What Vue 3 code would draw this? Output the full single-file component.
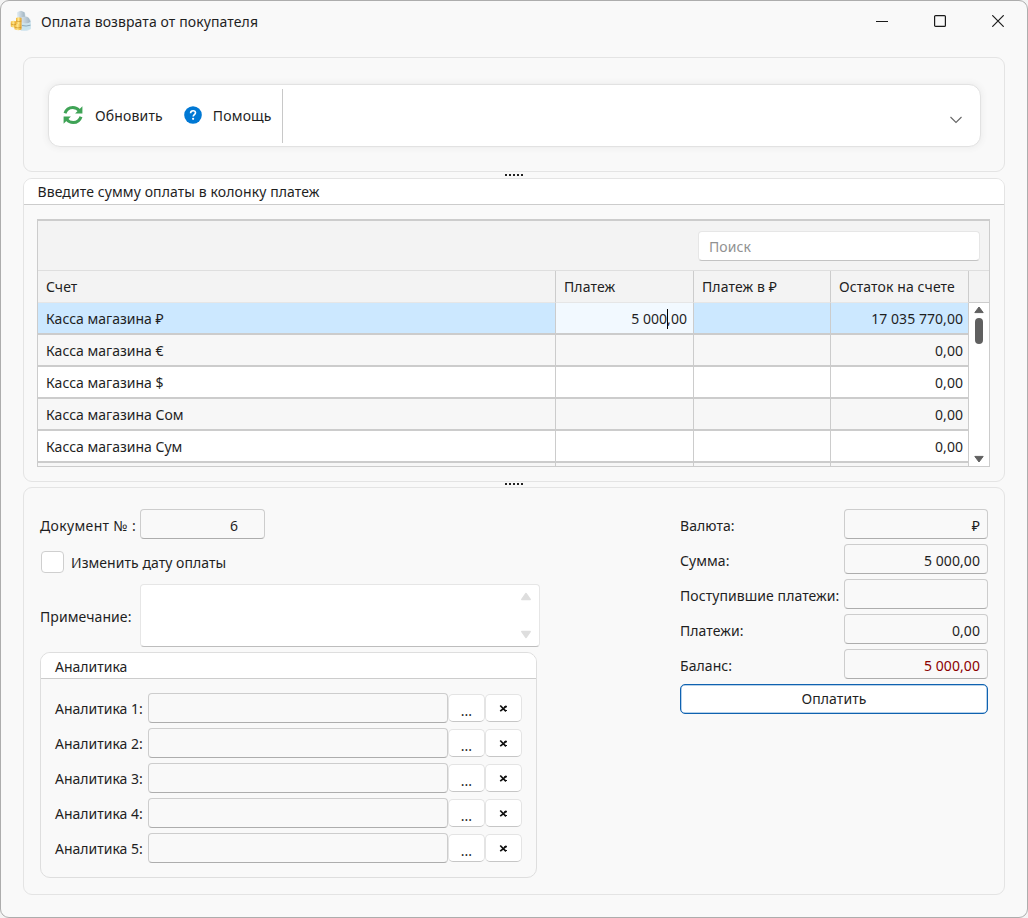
<script setup>
import { ref } from 'vue'

const rows = ref([
  { name: 'Касса магазина ₽', pay: '5 000,00', rest: '17 035 770,00', selected: true },
  { name: 'Касса магазина €', pay: '', rest: '0,00' },
  { name: 'Касса магазина $', pay: '', rest: '0,00' },
  { name: 'Касса магазина Сом', pay: '', rest: '0,00' },
  { name: 'Касса магазина Сум', pay: '', rest: '0,00' },
  { name: '', pay: '', rest: '' },
])

const totals = [
  { label: 'Валюта:', value: '₽' },
  { label: 'Сумма:', value: '5 000,00' },
  { label: 'Поступившие платежи:', value: '' },
  { label: 'Платежи:', value: '0,00' },
  { label: 'Баланс:', value: '5 000,00', due: true },
]
</script>

<template>
  <div class="desktop">
    <div class="window">
      <header class="titlebar">
        <svg class="app-icon" width="22" height="22" viewBox="0 0 22 22">
          <defs>
            <linearGradient id="gold" x1="0" x2="1"><stop offset="0" stop-color="#f0b53a" /><stop offset=".45" stop-color="#ffe68c" /><stop offset="1" stop-color="#e29d1e" /></linearGradient>
            <linearGradient id="steel" x1="0" x2="1"><stop offset="0" stop-color="#dfe8ee" /><stop offset="1" stop-color="#9fb3c0" /></linearGradient>
          </defs>
          <path d="M7 2.500 11 1l4 2 1 4 5 3v9l-4 2h-6l-3-6z" fill="#d9e8f0" />
          <path d="M7.500 2 11 .8l3.500 1.500.5 5-6 1z" fill="url(#steel)" />
          <path d="M10 8.500q5-3.500 9-.5l1.500 4q-5 3-10 0z" fill="url(#steel)" />
          <path d="M12 13q5 2 8.500-.5v6.500q-4 1.500-8.500 1z" fill="#c9e4ee" />
          <path d="M12 15.500q4 1.200 8.500-.3" fill="none" stroke="#8fa9b8" />
          <path d="M.8 11.500q3-1.500 5.500 0v5.500q-3 1-5.500-.5z" fill="url(#gold)" />
          <path d="M6 8q2.800-1.500 5.500 0v7q-2.500 1.500-5.500 0z" fill="url(#gold)" />
          <path d="M4.500 15q3.500-1.800 7 0v4.500q-3.500 1.500-7-.2z" fill="url(#gold)" />
          <path d="M6 11q3 1.300 5.500 0M.8 14q2.500 1.300 5.200.5M4.500 17.200q3.500 1.500 7 0" fill="none" stroke="#c48a1c" stroke-width=".6" />
        </svg>
        <span class="title">Оплата возврата от покупателя</span>
        <div class="controls">
          <svg width="12" height="12" viewBox="0 0 12 12"><path d="M0 6.500h12" stroke="#1b1b1b" /></svg>
          <svg width="12" height="12" viewBox="0 0 12 12"><rect x=".6" y=".6" width="10.800" height="10.800" rx="1" fill="none" stroke="#1b1b1b" stroke-width="1.200" /></svg>
          <svg width="12" height="12" viewBox="0 0 12 12"><path d="M.3.3l11.400 11.400M11.700.3.3 11.700" stroke="#1b1b1b" stroke-width="1.200" /></svg>
        </div>
      </header>

      <section class="panel tools">
        <div class="toolbar">
          <button class="tool refresh">
            <svg width="20" height="20" viewBox="0 0 20 20">
              <g fill="none" stroke="#3fa356" stroke-width="3">
                <path d="M2 8.200C3.200 4.500 6.300 2.400 9.800 2.400c2.900 0 4.900 1.200 6.500 3.200" />
                <path d="M18 11.800c-1.200 3.700-4.300 5.800-7.800 5.800-2.900 0-4.900-1.200-6.500-3.200" />
              </g>
              <path d="M19.400 1.200v7.300h-7.300zM.6 18.800v-7.300h7.300z" fill="#3fa356" />
            </svg>
            <span>Обновить</span>
          </button>
          <button class="tool help">
            <svg width="18" height="18" viewBox="0 0 18 18">
              <circle cx="9" cy="9" r="8.800" fill="#0078d4" />
              <path d="M6.600 7.200c0-1.500 1-2.500 2.500-2.500s2.400.9 2.400 2.100c0 1.700-2.300 1.900-2.300 3.700" fill="none" stroke="#fff" stroke-width="1.600" />
              <circle cx="9.100" cy="12.800" r="1.100" fill="#fff" />
            </svg>
            <span>Помощь</span>
          </button>
          <i class="divider"></i>
          <svg class="chevron" width="12" height="8" viewBox="0 0 12 8"><path d="M.5 1 6 6.400 11.500 1" fill="none" stroke="#666" stroke-width="1.100" /></svg>
        </div>
      </section>

      <div class="grip upper"><i v-for="n in 5" :key="n"></i></div>

      <section class="panel accounts">
        <h2 class="caption">Введите сумму оплаты в колонку платеж</h2>
        <div class="grid">
          <div class="searchbar"><div class="search">Поиск</div></div>
          <div class="head">
            <span class="c1">Счет</span><span class="c2">Платеж</span><span class="c3">Платеж в ₽</span><span class="c4">Остаток на счете</span><span class="c5"></span>
          </div>
          <div class="body">
            <div class="rows">
              <div v-for="(r, i) in rows" :key="i" class="row" :class="{ selected: r.selected, odd: i % 2 }">
                <span class="c1">{{ r.name }}</span>
                <span class="c2 num"><template v-if="r.selected">5 000<i class="caret"></i>,00</template></span>
                <span class="c3"></span>
                <span class="c4 num">{{ r.rest }}</span>
              </div>
            </div>
            <div class="scroll">
              <svg width="10" height="8" viewBox="0 0 10 8"><path d="M5 1 9.200 6.600H.8z" fill="#606060" stroke="#606060" stroke-linejoin="round" /></svg>
              <i class="thumb"></i>
              <svg class="down" width="10" height="8" viewBox="0 0 10 8"><path d="M5 7 9.200 1.400H.8z" fill="#606060" stroke="#606060" stroke-linejoin="round" /></svg>
            </div>
          </div>
        </div>
      </section>

      <div class="grip"><i v-for="n in 5" :key="n"></i></div>

      <section class="panel details">
        <div class="left">
          <div class="doc"><label>Документ № :</label><div class="field docno">6</div></div>
          <div class="check"><i class="box"></i><span>Изменить дату оплаты</span></div>
          <div class="note">
            <label>Примечание:</label>
            <div class="memo">
              <svg width="12" height="9" viewBox="0 0 12 9"><path d="M6 1.500 10.200 7.500H1.800z" fill="#dedede" stroke="#dedede" stroke-width="1.500" stroke-linejoin="round" /></svg>
              <svg width="12" height="9" viewBox="0 0 12 9"><path d="M6 7.500 10.200 1.500H1.800z" fill="#dedede" stroke="#dedede" stroke-width="1.500" stroke-linejoin="round" /></svg>
            </div>
          </div>
          <div class="group">
            <h3>Аналитика</h3>
            <div class="lines">
              <div v-for="n in 5" :key="n" class="line">
                <label>Аналитика {{ n }}:</label>
                <div class="field"></div>
                <button class="mini dots">...</button>
                <button class="mini">
                  <svg width="9" height="9" viewBox="0 0 9 9"><path d="M1.200 1.500 7 7.300M7.500 1.800 4.500 4.600 1.200 7.200" fill="none" stroke="#111" stroke-width="1.700" /><path d="M5 2.800h3M5.500 6.500H8" stroke="#111" stroke-width="1" /></svg>
                </button>
              </div>
            </div>
          </div>
        </div>
        <div class="right">
          <div v-for="t in totals" :key="t.label" class="total">
            <label>{{ t.label }}</label>
            <div class="field" :class="{ due: t.due }">{{ t.value }}</div>
          </div>
          <button class="pay">Оплатить</button>
        </div>
      </section>
    </div>
  </div>
</template>

<style>
html, body { background: #f3f3f3; }
</style>

<style scoped>
* { box-sizing: border-box; }
.desktop { width: 1028px; height: 918px; overflow: hidden; font: 14px/20px "Noto Sans", "Open Sans", sans-serif; color: #1f1f1f; }
button { font: inherit; color: inherit; letter-spacing: inherit; margin: 0; padding: 0; border: 0; background: none; }
span, label, .field, button { white-space: nowrap; }
.window { height: 918px; border: 1px solid #adadad; border-radius: 9px; background: #f9f9f9; padding: 0 22px; }
.titlebar { height: 56px; margin: 0 -22px; padding: 9px 23px 0 9px; display: flex; align-items: flex-start; }
.title { margin: 2px 0 0 9px; letter-spacing: .1px; }
.controls { margin: 5px 0 0 auto; display: flex; gap: 46px; }
.controls svg { display: block; }
.panel { border: 1px solid #e4e4e4; border-radius: 9px; }
.tools { height: 115px; padding: 26px 24px; }
.toolbar { height: 63px; margin-right: -1px; background: #fff; border: 1px solid #e2e2e2; border-radius: 12px; box-shadow: 0 0 6px 1px #ececec; display: flex; align-items: center; padding: 0 18px 0 14px; letter-spacing: .15px; }
.tool { display: flex; align-items: center; }
.tool svg { margin-top: -1px; }
.refresh span { margin-left: 12px; }
.help { margin-left: 21px; }
.help span { margin-left: 11px; }
.divider { width: 1px; height: 54px; background: #c8c8c8; margin-left: 10px; }
.chevron { margin: 9px 0 0 auto; }
.grip { height: 5px; padding-top: 1px; display: flex; justify-content: center; gap: 2px; }
.grip.upper { height: 6px; padding-top: 2px; }
.grip i { width: 2px; height: 2px; background: #222; }
.accounts { height: 304px; overflow: hidden; }
h2, h3 { margin: 0; font: inherit; background: #fff; border-bottom: 1px solid #ccc; }
.caption { height: 26px; padding: 3px 13px 0 13.500px; letter-spacing: .1px; }
.grid { margin: 14px 14px 0 13px; height: 248px; border: 1px solid #ccc; border-top-width: 2px; display: flex; flex-direction: column; background: #f3f3f3; }
.searchbar { height: 50px; border-bottom: 1px solid #dedede; display: flex; justify-content: flex-end; padding: 10px 9px 0 0; flex: none; }
.search { width: 282px; height: 30px; border: 1px solid #e6e6e6; border-bottom-color: #c3c3c3; border-radius: 4px; background: #fff; color: #919191; padding: 5px 10px; letter-spacing: .1px; }
.head { height: 32px; display: flex; flex: none; letter-spacing: .1px; }
.head span { padding: 6px 8px; border-right: 1px solid #ccc; border-bottom: 1px solid #e6e6e6; }
.head .c5 { flex: 1; border-right: 0; border-bottom-color: #ccc; }
.c1 { width: 518px; }
.c2, .c3, .c4 { width: 138px; }
.c3 { width: 137px; }
.body { flex: 1; min-height: 0; display: flex; overflow: hidden; }
.rows { width: 931px; flex: none; overflow: hidden; }
.row { height: 32px; display: flex; background: #fff; }
.row span { border-right: 1px solid #ccc; border-bottom: 2px solid #ccc; padding: 6px 8px 4px; height: 32px; }
.row.odd { background: #f7f7f7; }
.row.selected { background: #cce8ff; }
.row.selected .c2 { background: #f2f9ff; }
.row .num { text-align: right; padding: 6px 5px 4px 0; letter-spacing: .05px; }
.row .c2.num { padding-right: 6px; }
.caret { display: inline-block; width: 1px; height: 20px; background: #000; vertical-align: -5px; margin: 0 -1px 0 0; }
.scroll { flex: 1; background: #fff; display: flex; flex-direction: column; align-items: center; padding: 3px 0; }
.scroll svg { display: block; flex: none; }
.thumb { width: 8px; height: 26px; border-radius: 4px; background: #606060; margin-top: 4px; }
.down { margin-top: auto; }
.details { height: 408px; display: flex; padding: 21px 16px 0; }
.left { width: 500px; margin-right: 140px; }
.right { width: 308px; letter-spacing: .07px; }
.field { border: 1px solid #cdcdcd; border-bottom-color: #adadad; border-radius: 4px; height: 30px; text-align: right; padding: 6px 7px 0; background: #f9f9f9; }
.doc { display: flex; height: 30px; }
.doc label { width: 100px; padding-top: 7px; letter-spacing: .35px; }
.docno { width: 125px; padding-right: 26px; }
.check { display: flex; margin: 12px 0 0 1px; height: 23px; }
.box { width: 23px; height: 22px; border: 1px solid #cfcfcf; border-radius: 4px; background: #fff; margin-right: 7px; }
.check span { padding-top: 2px; letter-spacing: .05px; }
.note { display: flex; margin-top: 10px; height: 63px; }
.note label { width: 100px; padding-top: 23px; letter-spacing: .08px; }
.memo { width: 400px; border: 1px solid #e6e6e6; border-bottom-color: #bdbdbd; border-radius: 4px; background: #fff; display: flex; flex-direction: column; justify-content: space-between; align-items: flex-end; padding: 7px 7px 7px 0; }
.memo svg { display: block; }
.group { margin-top: 5px; width: 497px; height: 226px; border: 1px solid #dedede; border-radius: 10px; overflow: hidden; }
.group h3 { height: 26px; padding: 4px 14px 0; }
.lines { padding: 14px; display: grid; gap: 5px; }
.line { display: flex; align-items: center; height: 30px; }
.line label { width: 93px; padding-top: 2px; }
.line .field { width: 300px; }
.mini { width: 37px; height: 28px; border: 1px solid #e4e4e4; border-bottom-color: #c6c6c6; border-radius: 5px; background: #fff; }
.mini svg { display: block; margin: 0 auto; }
.dots { padding-top: 5px; line-height: 20px; }
.total { display: flex; justify-content: space-between; height: 30px; margin-bottom: 5px; }
.total label { padding-top: 7px; }
.total .field { width: 144px; }
.total .due { color: #8b0000; }
.pay { display: block; width: 308px; height: 30px; border: 1px solid #0f62b0; border-radius: 5px; background: #fff; box-shadow: inset 0 0 0 .5px #6fa3d4; }
</style>
